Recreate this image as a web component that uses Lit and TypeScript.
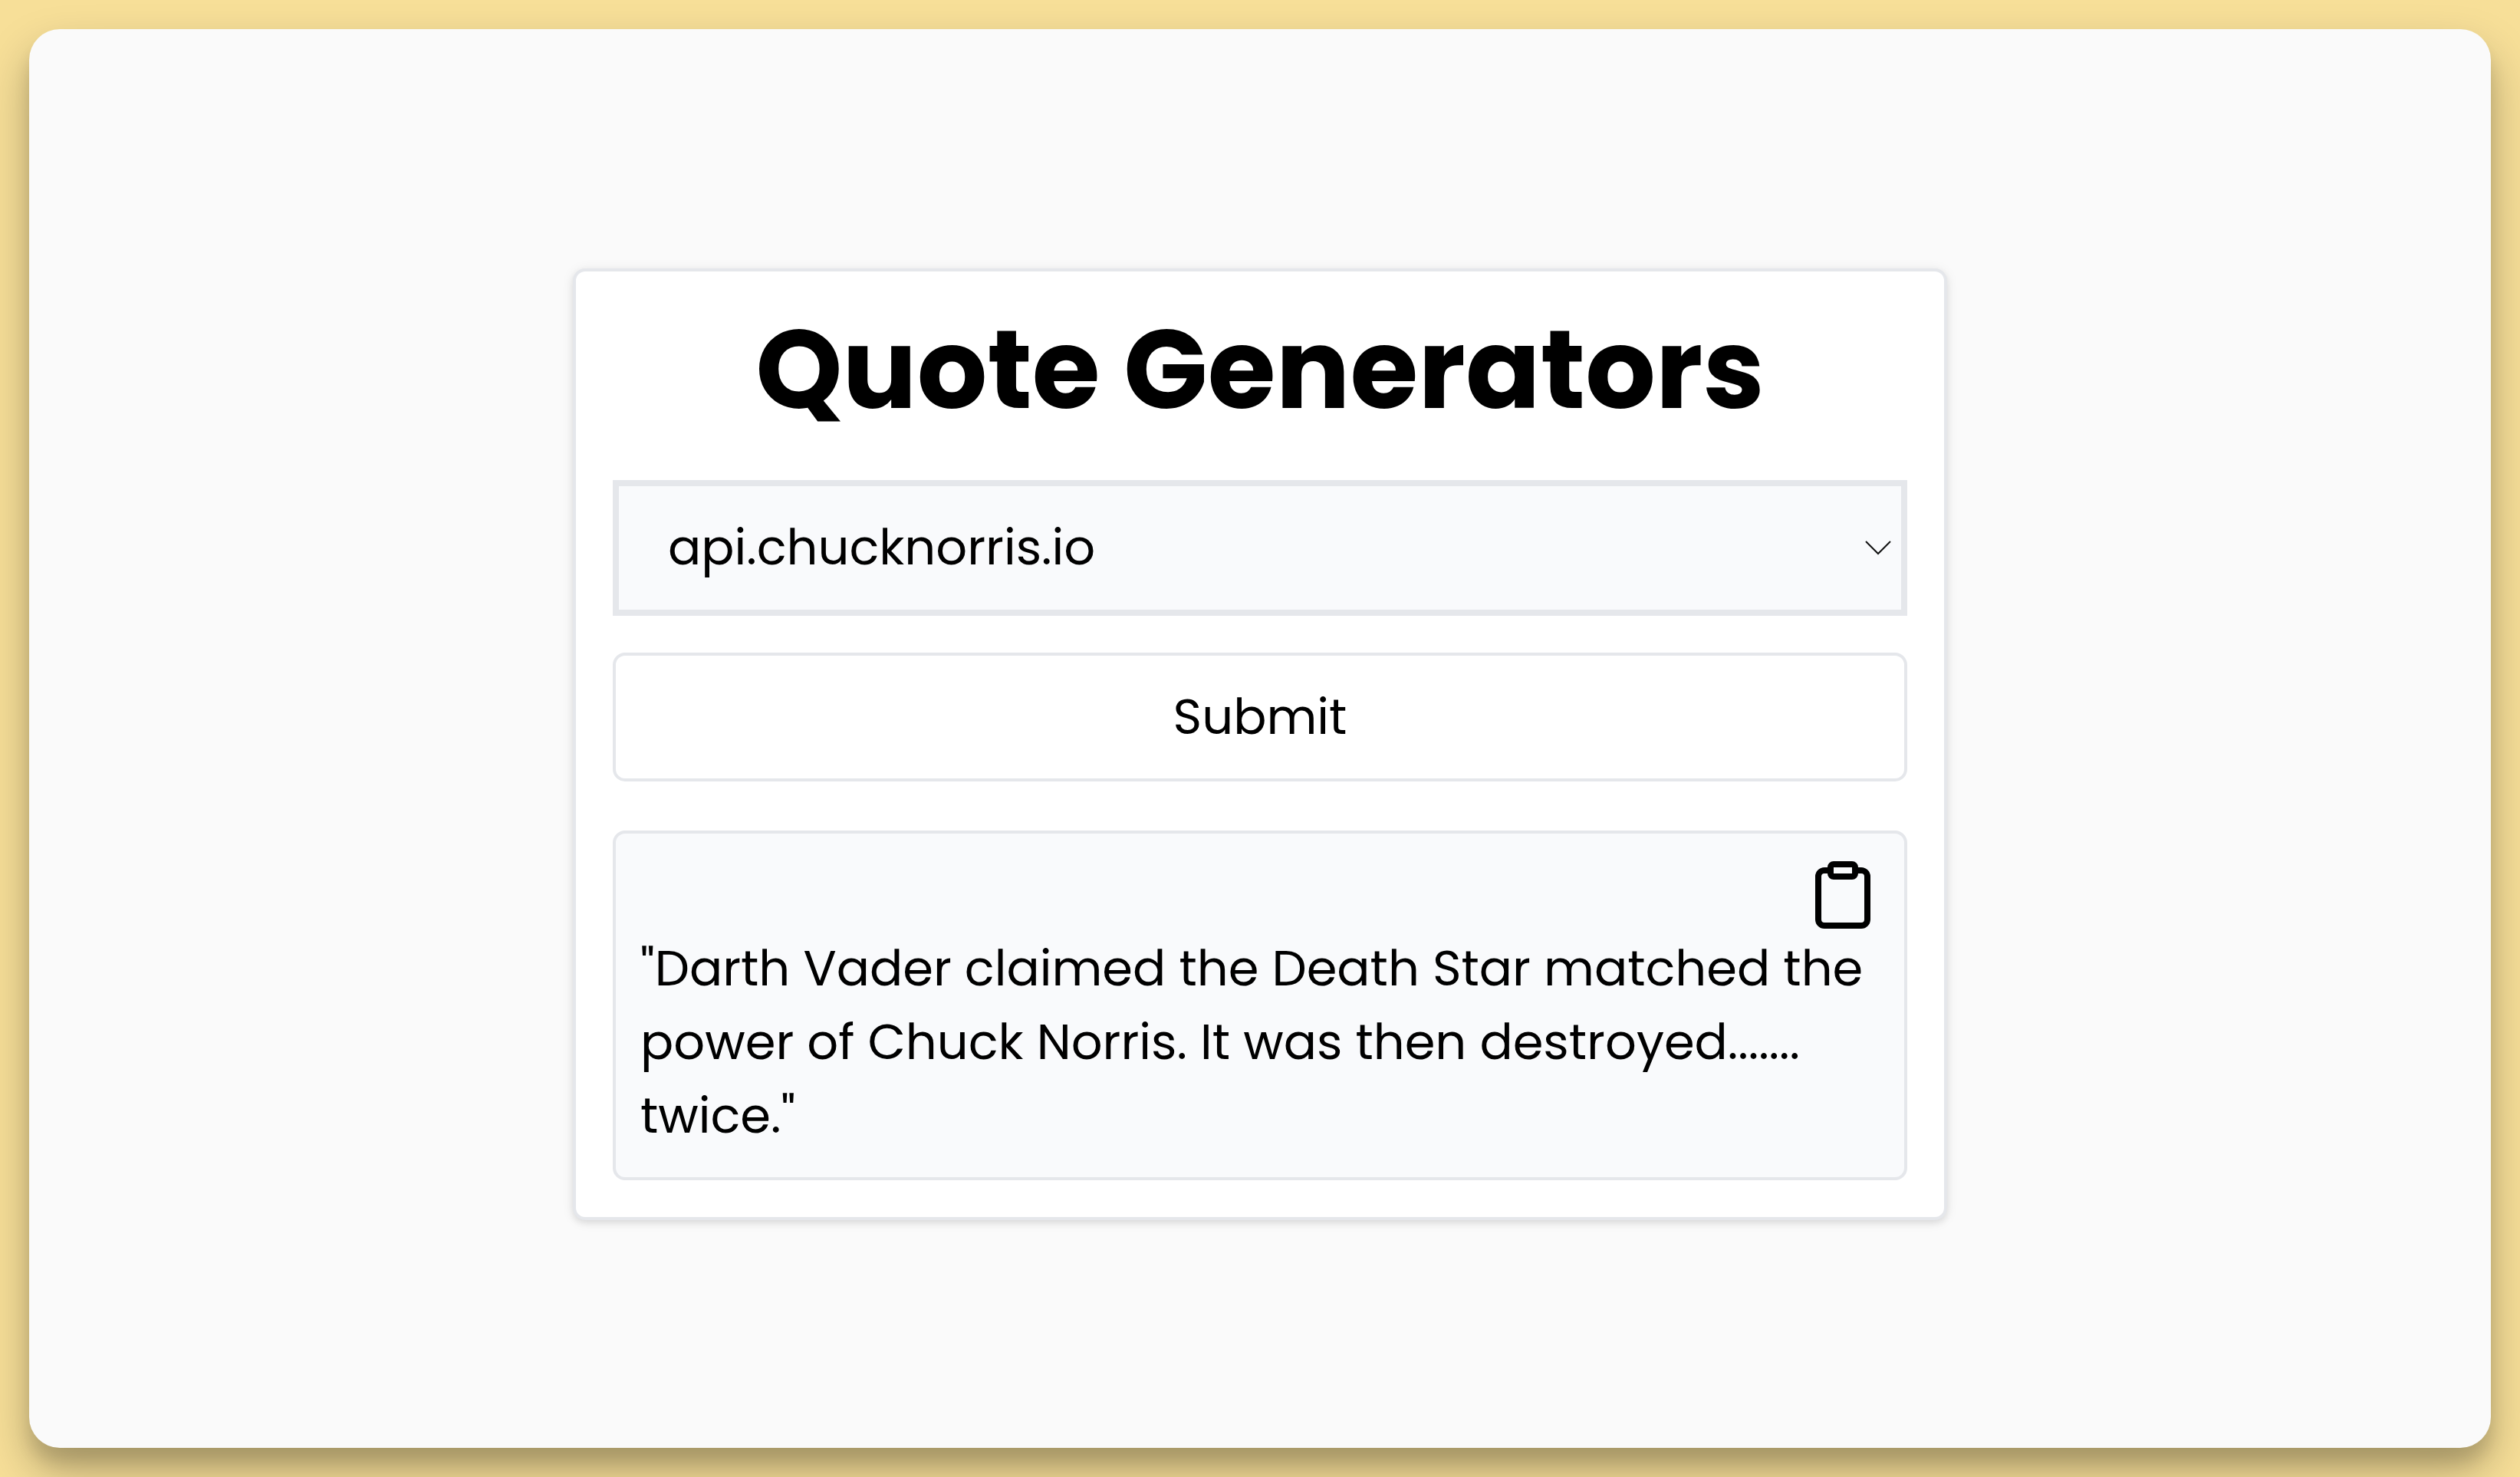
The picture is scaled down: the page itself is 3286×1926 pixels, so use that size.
import { LitElement, html, css } from "lit";
import { customElement, state } from "lit/decorators.js";

@customElement("app-root")
export class AppRoot extends LitElement {
  static styles = css`
    :host {
      display: flex;
      box-sizing: border-box;
      min-height: 100vh;
      padding: 38px;
      background: #f7df98;
      color: #000;
      font-family: Poppins, Inter, "Open Sans", sans-serif;
      font-size: 64px;
      line-height: 96px;
    }
    *,
    *::before,
    *::after {
      box-sizing: border-box;
    }
    .panel {
      flex: 1;
      display: flex;
      align-items: center;
      justify-content: center;
      padding-top: 14px;
      border-radius: 40px;
      background: #fafafa;
      box-shadow: 0 30px 60px rgba(0, 0, 0, 0.28), 0 20px 20px rgba(0, 0, 0, 0.1);
    }
    .card {
      display: flex;
      flex-direction: column;
      width: 100%;
      max-width: 1792px;
      padding: 48px;
      border: 4px solid #e5e7eb;
      border-radius: 16px;
      background: #fff;
      box-shadow: 0 2px 16px rgba(0, 0, 0, 0.08), 0 4px 8px rgba(0, 0, 0, 0.08);
    }
    .title {
      margin: 0 0 64px;
      font-size: 144px;
      font-weight: 700;
      line-height: 160px;
      text-align: center;
    }
    .form {
      display: flex;
      flex-direction: column;
      gap: 48px;
      margin-bottom: 64px;
    }
    .picker {
      display: grid;
      align-items: center;
    }
    .picker > * {
      grid-area: 1 / 1;
    }
    .select {
      appearance: none;
      width: 100%;
      margin: 0;
      height: 177px;
      padding: 32px 64px;
      border: 8px solid #e5e7eb;
      border-radius: 0;
      background: #f9fafc;
      color: inherit;
      font: inherit;
    }
    .chevron {
      justify-self: end;
      width: 36px;
      height: 20px;
      margin-right: 20px;
      pointer-events: none;
    }
    .submit {
      height: 168px;
      margin: 0;
      padding: 32px;
      border: 4px solid #e5e7eb;
      border-radius: 16px;
      background: #fff;
      color: inherit;
      font: inherit;
    }
    .result {
      display: flex;
      flex-direction: column;
      padding: 32px;
      border: 4px solid #e5e7eb;
      border-radius: 16px;
      background: #f9fafc;
    }
    .copy {
      align-self: flex-end;
      display: flex;
      margin: 0;
      padding: 0;
      border: 0;
      background: none;
      color: inherit;
    }
    .clipboard {
      width: 96px;
      height: 96px;
    }
    .quote {
      margin: 0;
    }
  `;

  @state() private source = "api.chucknorris.io";

  @state() private quote =
    "Darth Vader claimed the Death Star matched the power of Chuck Norris. It was then destroyed....... twice.";

  private pick(event: Event) {
    this.source = (event.target as HTMLSelectElement).value;
  }

  private copy() {
    navigator.clipboard?.writeText(this.quote);
  }

  render() {
    return html`
      <main class="panel">
        <section class="card">
          <h1 class="title">Quote Generators</h1>
          <form class="form" @submit=${(e: Event) => e.preventDefault()}>
            <div class="picker">
              <select class="select" aria-label="Quote source" .value=${this.source} @change=${this.pick}>
                <option>api.chucknorris.io</option>
              </select>
              <svg class="chevron" viewBox="0 0 36 20" fill="none" stroke="#111" stroke-width="2" aria-hidden="true">
                <path d="M2 2L18 18L34 2" />
              </svg>
            </div>
            <button class="submit" type="submit">Submit</button>
          </form>
          <div class="result">
            <button class="copy" type="button" aria-label="Copy quote" @click=${this.copy}>
              <svg
                class="clipboard"
                viewBox="0 0 24 24"
                fill="none"
                stroke="currentColor"
                stroke-width="2"
                stroke-linecap="round"
                stroke-linejoin="round"
                aria-hidden="true"
              >
                <path d="M16 4h2a2 2 0 0 1 2 2v14a2 2 0 0 1-2 2H6a2 2 0 0 1-2-2V6a2 2 0 0 1 2-2h2" />
                <rect x="8" y="2" width="8" height="4" rx="1" ry="1" />
              </svg>
            </button>
            <p class="quote">${`"${this.quote}"`}</p>
          </div>
        </section>
      </main>
    `;
  }
}
